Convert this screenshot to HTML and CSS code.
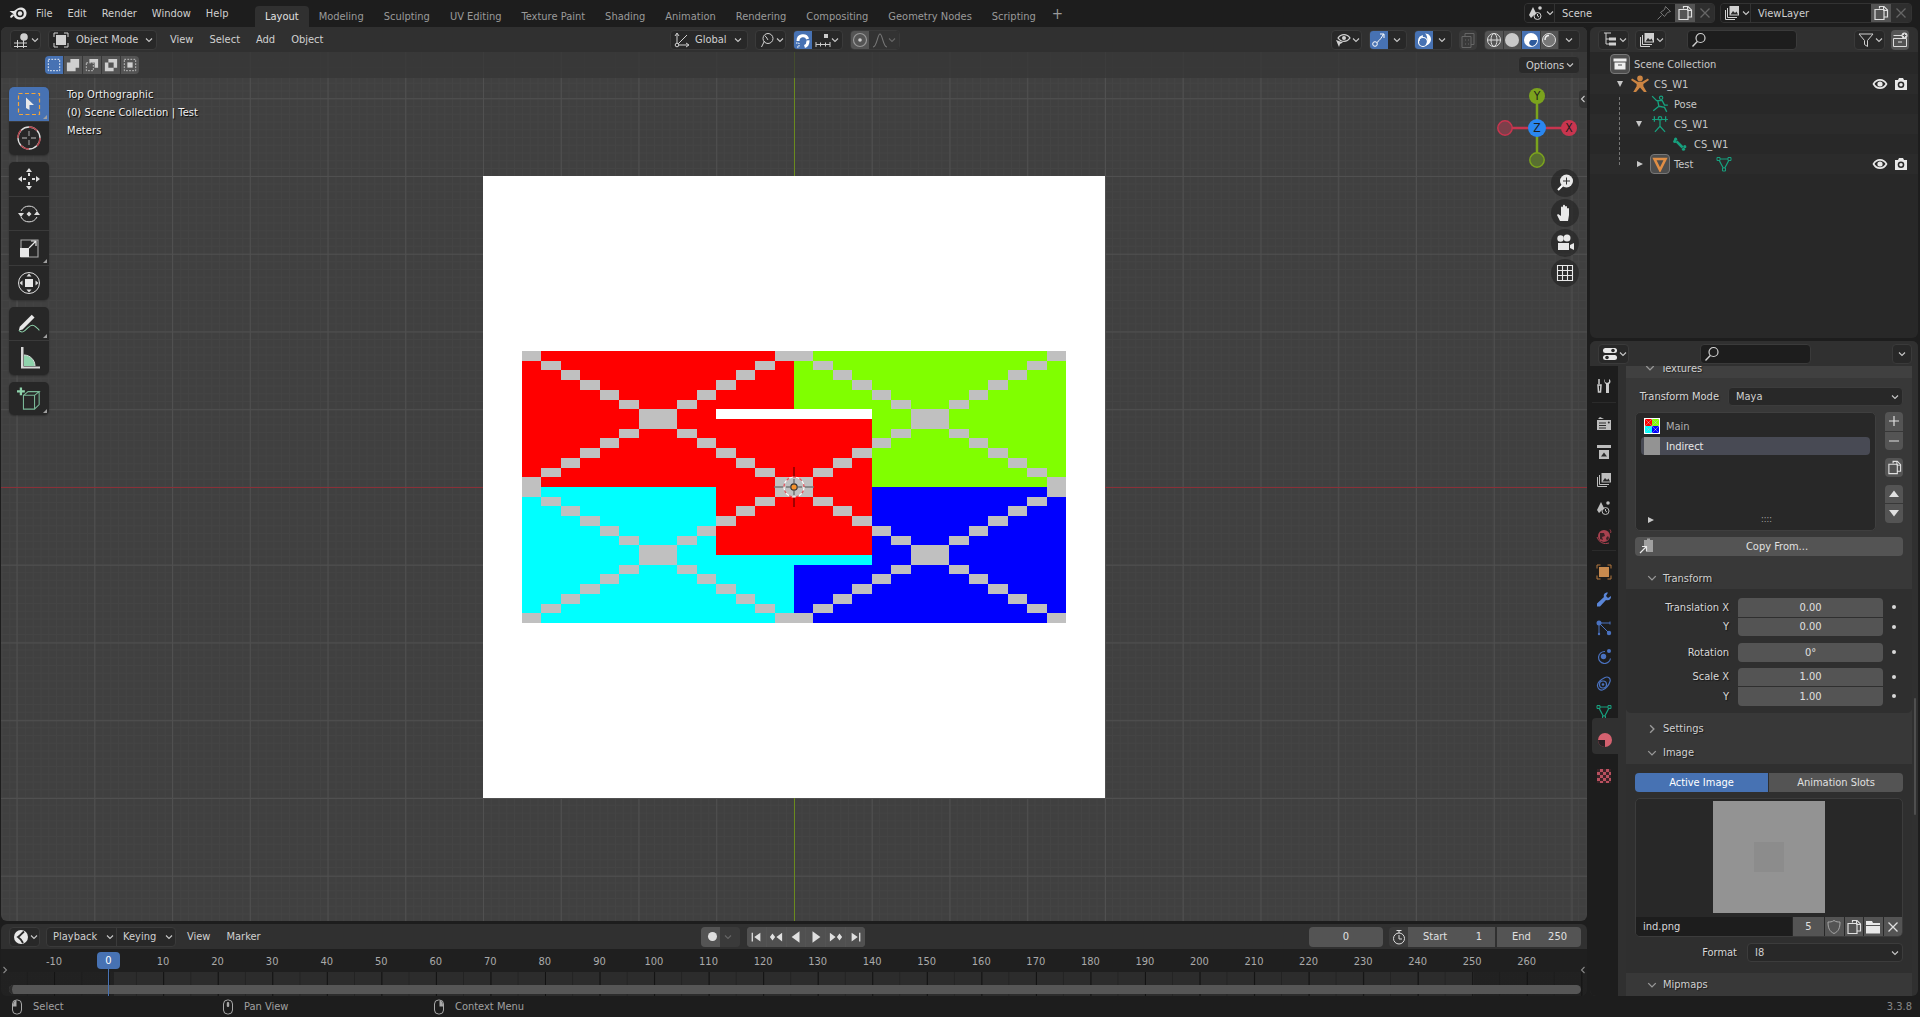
FILE: index.html
```html
<!DOCTYPE html>
<html lang="en">
<head>
<meta charset="utf-8">
<title>Blender</title>
<link rel="stylesheet" href="styles.css">
</head>
<body>
<svg class="sprite" aria-hidden="true">
  <defs>
    <symbol id="chev" viewBox="0 0 8 8"><path d="M1 2.500l3 3 3-3" fill="none" stroke="currentColor" stroke-width="1.100"/></symbol>
    <symbol id="copy" viewBox="0 0 16 16"><path d="M6.500 3.500V1.500h4.500l3.500 3.500v7h-3.500M2 4.500h9V14.500H2z" fill="none" stroke="currentColor" stroke-width="1.200"/><path d="M10.500 1.500v4h4" fill="none" stroke="currentColor"/></symbol>
    <symbol id="close" viewBox="0 0 16 16"><path d="M3.500 3.500l9 9M12.500 3.500l-9 9" stroke="currentColor" stroke-width="1.300"/></symbol>
    <symbol id="eye" viewBox="0 0 16 16"><path d="M1.500 8c3-5.500 10-5.500 13 0c-3 5.500-10 5.500-13 0z" fill="none" stroke="currentColor" stroke-width="1.600"/><circle cx="8" cy="8" r="2.600" fill="currentColor"/></symbol>
    <symbol id="cam" viewBox="0 0 16 16"><path d="M2 4h3l1-2h4l1 2h3v10H2z" fill="currentColor"/><circle cx="8" cy="8.800" r="3.300" fill="#2a2a2a"/><circle cx="8" cy="8.800" r="1.800" fill="currentColor"/></symbol>
    <symbol id="search" viewBox="0 0 16 16"><circle cx="9.500" cy="6" r="4.500" fill="none" stroke="currentColor" stroke-width="1.200"/><path d="M6.300 9.500L1.500 14.500" stroke="currentColor" stroke-width="1.400"/></symbol>
    <symbol id="layers" viewBox="0 0 16 16"><path d="M1.500 5v9.500H11M3.500 3v9.500H13" fill="none" stroke="currentColor"/><rect x="5.500" y="1" width="9.500" height="9.500" fill="currentColor"/><path d="M6.500 9.500l2.500-3.500 2 2 1.500-1.500 1.500 3z" fill="#2a2a2a"/></symbol>
    <symbol id="scene" viewBox="0 0 16 16"><path d="M5 2l3.500 7-2.500 1-3 3-2-3z" fill="currentColor"/><circle cx="12" cy="3" r="1.800" fill="currentColor"/><circle cx="9.500" cy="11" r="3.500" fill="none" stroke="currentColor"/><path d="M9.500 9v2l1.500 1" fill="none" stroke="currentColor"/></symbol>
    <symbol id="mesh" viewBox="0 0 16 16"><path d="M2.500 3h11L8 13.500z" fill="none" stroke="currentColor" stroke-width="1.200"/><path d="M1 1.500h3v3H1zM12 1.500h3v3h-3zM6.500 12h3v3h-3z" fill="#2a2a2a" stroke="currentColor"/></symbol>
    <symbol id="mouse-l" viewBox="0 0 12 16"><rect x="1.500" y="1" width="9" height="14" rx="4" fill="none" stroke="currentColor"/><path d="M2 7.500h3.500V1.500C3 1.500 2 4 2 7.500z" fill="currentColor"/></symbol>
    <symbol id="mouse-m" viewBox="0 0 12 16"><rect x="1.500" y="1" width="9" height="14" rx="4" fill="none" stroke="currentColor"/><rect x="4.800" y="3" width="2.400" height="5" rx="1" fill="currentColor"/></symbol>
    <symbol id="mouse-r" viewBox="0 0 12 16"><rect x="1.500" y="1" width="9" height="14" rx="4" fill="none" stroke="currentColor"/><path d="M10 7.500H6.500V1.500C9 1.500 10 4 10 7.500z" fill="currentColor"/></symbol>
    <g id="xmark" fill="#c0c0c0">
      <path d="M0 0h1v1H0zM13 0h1v1h-1zM1 1h1v1H1zM12 1h1v1h-1zM2 2h1v1H2zM11 2h1v1h-1zM3 3h1v1H3zM10 3h1v1h-1zM4 4h1v1H4zM9 4h1v1H9zM5 5h1v1H5zM8 5h1v1H8zM6 6h2v2H6zM5 8h1v1H5zM8 8h1v1H8zM4 9h1v1H4zM9 9h1v1H9zM3 10h1v1H3zM10 10h1v1h-1zM2 11h1v1H2zM11 11h1v1h-1zM1 12h1v1H1zM12 12h1v1h-1zM0 13h1v1H0zM13 13h1v1h-1z"/>
    </g>
    <symbol id="quads" viewBox="0 0 28 28" preserveAspectRatio="none">
      <rect width="14" height="14" fill="#f00"/>
      <rect x="14" width="14" height="14" fill="#80ff00"/>
      <rect y="14" width="14" height="14" fill="#0ff"/>
      <rect x="14" y="14" width="14" height="14" fill="#00f"/>
      <use href="#xmark"/>
      <use href="#xmark" x="14"/>
      <use href="#xmark" y="14"/>
      <use href="#xmark" x="14" y="14"/>
    </symbol>
  </defs>
</svg>

<div class="app">
  <header class="topbar">
    <svg class="logo" viewBox="0 0 20 16" width="20" height="16"><path d="M1 9.500h5L1.500 6h4.500L9.500 3.500C13 1 18 3 18.500 7.500C19 12.500 14.500 15 11 14.500C8 14 6 12.500 6 10.500L4 12.500C3 13.500 1.500 12 2.500 11L4 9.500z" fill="#e6e6e6"/><circle cx="12" cy="8.500" r="3.800" fill="#1d1d1d"/><circle cx="12" cy="8.500" r="2.200" fill="#e6e6e6"/></svg>
    <nav class="menus">
      <span class="menu">File</span><span class="menu">Edit</span><span class="menu">Render</span><span class="menu">Window</span><span class="menu">Help</span>
    </nav>
    <nav class="tabs">
      <span class="tab tab-on">Layout</span><span class="tab">Modeling</span><span class="tab">Sculpting</span><span class="tab">UV Editing</span><span class="tab">Texture Paint</span><span class="tab">Shading</span><span class="tab">Animation</span><span class="tab">Rendering</span><span class="tab">Compositing</span><span class="tab">Geometry Nodes</span><span class="tab">Scripting</span><span class="tab tab-plus">+</span>
    </nav>
    <div class="selector sel-scene">
      <span class="sel-icon"><svg class="ic16"><use href="#scene"/></svg><svg class="chev"><use href="#chev"/></svg></span>
      <span class="sel-name sel-name-scene">Scene<svg class="ic16 pin" viewBox="0 0 16 16"><path d="M9.500 1.500l5 5-3 1-3 4-4-4 4-3zM5.500 10.500L1.500 14.500" fill="none" stroke="currentColor"/></svg></span>
      <span class="sel-btn sel-btn-on"><svg class="ic16"><use href="#copy"/></svg></span>
      <span class="sel-btn sel-btn-x"><svg class="ic16"><use href="#close"/></svg></span>
    </div>
    <div class="selector sel-layer">
      <span class="sel-icon"><svg class="ic16"><use href="#layers"/></svg><svg class="chev"><use href="#chev"/></svg></span>
      <span class="sel-name sel-name-layer">ViewLayer</span>
      <span class="sel-btn sel-btn-on"><svg class="ic16"><use href="#copy"/></svg></span>
      <span class="sel-btn sel-btn-x"><svg class="ic16"><use href="#close"/></svg></span>
    </div>
  </header>

  <main class="main">
    <div class="col-left">
      <section class="viewport">
        <div class="vp-header">
          <div class="vh-left">
            <span class="drop drop-icon"><svg class="ic16" viewBox="0 0 16 16"><path d="M0 11h13M0 14.500h13M3.500 8v8M9.500 8v8" stroke="currentColor" fill="none"/><circle cx="10" cy="5" r="3.800" fill="currentColor"/></svg><svg class="chev"><use href="#chev"/></svg></span>
            <span class="drop drop-mode"><svg class="ic16" viewBox="0 0 16 16"><path d="M1 5V1h4M11 1h4v4M15 11v4h-4M5 15H1v-4" fill="none" stroke="currentColor"/><rect x="3" y="3" width="10" height="10" fill="currentColor"/></svg><span class="drop-text">Object Mode</span><svg class="chev"><use href="#chev"/></svg></span>
            <span class="hmenus"><span class="hmenu">View</span><span class="hmenu">Select</span><span class="hmenu">Add</span><span class="hmenu">Object</span></span>
          </div>
          <div class="vh-center">
            <span class="drop drop-global"><svg class="ic16" viewBox="0 0 16 16"><path d="M3 13V2M3 13L13 3M3 13h11M1 4l2-3 2 3M12 11l3 2-3 2" fill="none" stroke="currentColor"/><circle cx="3" cy="13" r="1.800" fill="#2b2b2b" stroke="currentColor"/></svg><span class="drop-text">Global</span><svg class="chev"><use href="#chev"/></svg></span>
            <span class="drop drop-pivot"><svg class="ic16" viewBox="0 0 16 16"><circle cx="9" cy="6.500" r="5" fill="none" stroke="currentColor"/><path d="M5.500 9L2.500 15M6 4c2 1 2 3 3 4" fill="none" stroke="currentColor"/></svg><svg class="chev"><use href="#chev"/></svg></span>
            <span class="seg seg-snap"><span class="seg-b seg-blue"><svg class="ic16" viewBox="0 0 16 16"><path d="M3 9C3 2 13 2 13 9c0 3-2 5-3.500 5.500" fill="none" stroke="#fff" stroke-width="3" stroke-dasharray="14 1.500"/><path d="M1 11h3v4H1" fill="none" stroke="#fff" stroke-width="1" stroke-dasharray="1.500 1"/></svg></span><span class="seg-b seg-wide"><svg class="ic16" viewBox="0 0 16 16"><rect x="9" y="2" width="4" height="4" fill="currentColor"/><path d="M1 10v5M15 10v5M1 12.500h14M5.500 10.500v4M10.500 10.500v4" stroke="currentColor" fill="none"/></svg><svg class="chev"><use href="#chev"/></svg></span></span>
            <span class="seg seg-prop"><span class="seg-b seg-grey"><svg class="ic16" viewBox="0 0 16 16"><circle cx="8" cy="8" r="6.500" fill="none" stroke="#999" stroke-width="1.200"/><circle cx="8" cy="8" r="1.800" fill="#ccc"/></svg></span><span class="seg-b seg-wide seg-dim"><svg class="ic16" viewBox="0 0 16 16"><path d="M1 15C5 15 5.500 2 8 2s3 13 7 13" fill="none" stroke="currentColor" stroke-width="1.100"/></svg><svg class="chev"><use href="#chev"/></svg></span></span>
          </div>
          <div class="vh-right">
            <span class="drop drop-pivot"><svg class="ic16" viewBox="0 0 16 16"><path d="M3 6c3-4.500 9-4.500 12 0c-3 4.500-9 4.500-12 0z" fill="none" stroke="currentColor" stroke-width="1.300"/><circle cx="9" cy="6" r="2" fill="currentColor"/><path d="M1 8l7 2.500-3 1.500-1 3z" fill="currentColor"/></svg><svg class="chev"><use href="#chev"/></svg></span>
            <span class="seg seg-gizmo"><span class="seg-b seg-blue"><svg class="ic16" viewBox="0 0 16 16"><circle cx="4" cy="12" r="2.300" fill="none" stroke="#fff"/><path d="M6 10.500C9 8 11 5 12.500 2M9 2h4v4" fill="none" stroke="#fff"/></svg></span><span class="seg-b seg-chev"><svg class="chev"><use href="#chev"/></svg></span></span>
            <span class="seg seg-gizmo"><span class="seg-b seg-blue"><svg class="ic16" viewBox="0 0 16 16"><circle cx="7" cy="10" r="4.500" fill="none" stroke="#fff" stroke-width="1.200"/><path d="M9 1.500c4 0 6 3 6 6s-3 6-6 6c3-2 3-10 0-12z" fill="#fff"/><path d="M7 4C5 4 2.500 6 3 9" fill="none" stroke="#fff" stroke-width="1.500"/></svg></span><span class="seg-b seg-chev"><svg class="chev"><use href="#chev"/></svg></span></span>
            <span class="seg seg-xray"><svg class="ic16 dim-ic" viewBox="0 0 16 16"><path d="M5 4.500V1.500h9v11h-3M2 4.500h9v11H2z" fill="none" stroke="currentColor"/><path d="M5 8h1M8 8h1M5 12h1M8 12h1" stroke="currentColor"/></svg></span>
            <span class="seg seg-shade"><span class="seg-b seg-sh"><svg class="ic16" viewBox="0 0 16 16"><circle cx="8" cy="8" r="6.500" fill="none" stroke="currentColor"/><ellipse cx="8" cy="8" rx="3" ry="6.500" fill="none" stroke="currentColor"/><path d="M1.500 8h13" stroke="currentColor"/></svg></span><span class="seg-b seg-sh"><svg class="ic16" viewBox="0 0 16 16"><circle cx="8" cy="8" r="7" fill="#c9c9c9"/></svg></span><span class="seg-b seg-sh seg-blue"><svg class="ic16" viewBox="0 0 16 16"><circle cx="8" cy="8" r="7" fill="#fff"/><path d="M8 8h6c0 3-2 5.500-5 6-3-1-4-4-1-6z" fill="#2d5a9c"/></svg></span><span class="seg-b seg-sh"><svg class="ic16" viewBox="0 0 16 16"><circle cx="8" cy="8" r="6.500" fill="#777" stroke="#ddd"/><path d="M4 8c0-3 2-4.500 4-4.500" fill="none" stroke="#eee" stroke-width="1.500"/></svg></span><span class="seg-b seg-shchev"><svg class="chev"><use href="#chev"/></svg></span></span>
          </div>
        </div>
        <div class="vp-tools">
          <span class="boxmodes">
            <span class="bm bm-on"><svg class="ic16" viewBox="0 0 16 16"><rect x="1.500" y="1.500" width="13" height="13" fill="none" stroke="#fff" stroke-dasharray="2 1.500"/></svg></span>
            <span class="bm"><svg class="ic16" viewBox="0 0 16 16"><path d="M5 1h10v10h-4v4H1V5h4z" fill="#cfcfcf"/></svg></span>
            <span class="bm"><svg class="ic16" viewBox="0 0 16 16"><path d="M5 1h10v10h-4V5H5z" fill="#cfcfcf"/><path d="M1.500 5.500h8v9h-8z" fill="none" stroke="#cfcfcf" stroke-dasharray="2 1.500"/></svg></span>
            <span class="bm"><svg class="ic16" viewBox="0 0 16 16"><path d="M5 1h10v10h-4V5H5z" fill="#cfcfcf"/><path d="M1 5h10v10H1zM5 5v6h6V5z" fill="#cfcfcf" fill-rule="evenodd"/></svg></span>
            <span class="bm"><svg class="ic16" viewBox="0 0 16 16"><rect x="1.500" y="1.500" width="13" height="13" fill="none" stroke="#cfcfcf" stroke-dasharray="2 1.500"/><rect x="5" y="5" width="6" height="6" fill="#cfcfcf"/></svg></span>
          </span>
          <span class="drop drop-options"><span class="drop-text">Options</span><svg class="chev"><use href="#chev"/></svg></span>
        </div>

        <div class="axis axis-y"></div>
        <div class="axis axis-x"></div>

        <div class="texture">
          <svg class="tex-svg" viewBox="0 0 28 28" preserveAspectRatio="none" shape-rendering="crispEdges">
            <use href="#quads" width="28" height="28"/>
            <rect x="10" y="6" width="8" height="1" fill="#fff"/>
            <rect x="10" y="7" width="8" height="14" fill="#f00"/>
            <rect x="10" y="21" width="8" height="1" fill="#0ff"/>
            <path fill="#c0c0c0" d="M10 10h1v1h-1zM17 10h1v1h-1zM11 11h1v1h-1zM16 11h1v1h-1zM12 12h1v1h-1zM15 12h1v1h-1zM13 13h2v2h-2zM12 15h1v1h-1zM15 15h1v1h-1zM11 16h1v1h-1zM16 16h1v1h-1zM10 17h1v1h-1zM17 17h1v1h-1z"/>
          </svg>
          <svg class="cursor3d" viewBox="0 0 44 44" width="44" height="44">
            <path d="M22 2v10M22 32v10" stroke="#a00000" stroke-width="2"/>
            <path d="M2 22h10M32 22h10M22 14v4M22 26v4M14 22h4M26 22h4" stroke="#777" stroke-width="1.600"/>
            <circle cx="22" cy="22" r="10" fill="none" stroke="#fff" stroke-width="1.200" stroke-dasharray="4 3"/>
            <circle cx="22" cy="22" r="10" fill="none" stroke="#e8505a" stroke-width="1.200" stroke-dasharray="3 4" stroke-dashoffset="3.500"/>
            <circle cx="22" cy="22" r="3.200" fill="#f5922b" stroke="#333" stroke-width="1.200"/>
          </svg>
        </div>

        <div class="vp-info">
          <div>Top Orthographic</div>
          <div>(0) Scene Collection | Test</div>
          <div>Meters</div>
        </div>

        <aside class="toolbar">
          <div class="tgroup">
            <span class="tool tool-on has-sub"><svg class="ic24" viewBox="0 0 24 24"><rect x="1.500" y="1.500" width="21" height="21" fill="none" stroke="#f3a53a" stroke-width="1.200" stroke-dasharray="4 2.500"/><path d="M9 5.500l8 7.500h-4.500l0 5L9 16z" fill="#e8e8e8"/></svg></span>
            <span class="tool"><svg class="ic24" viewBox="0 0 24 24"><circle cx="12" cy="12" r="11" fill="none" stroke="#ddd" stroke-width="1.300"/><path d="M12 1a11 11 0 0 1 8 3.500M1 12a11 11 0 0 1 3-8M12 23a11 11 0 0 1-8-3.500M23 12a11 11 0 0 1-3 8" fill="none" stroke="#b04048" stroke-width="1.400"/><path d="M12 5v5M12 14v5M5 12h5M14 12h5" stroke="#8c8c8c" stroke-width="1.300"/></svg></span>
          </div>
          <div class="tgroup">
            <span class="tool"><svg class="ic24" viewBox="0 0 24 24" fill="#ddd"><path d="M12 1l3 4H9zM12 23l-3-4h6zM1 12l4-3v6zM23 12l-4 3V9z"/><path d="M11 6h2v3h-2zM11 15h2v3h-2zM6 11h3v2H6zM15 11h3v2h-3z"/></svg></span>
            <span class="tool"><svg class="ic24" viewBox="0 0 24 24"><path d="M4 9a9 9 0 0 1 16 0M20 15a9 9 0 0 1-16 0" fill="none" stroke="#ddd" stroke-width="1"/><path d="M12 9.500l2.500 2.500-2.500 2.500L9.500 12zM1 11h6l-3 4zM23 13h-6l3-4z" fill="#ddd"/></svg></span>
            <span class="tool has-sub"><svg class="ic24" viewBox="0 0 24 24"><path d="M4 4h17v17H4z" fill="none" stroke="#aaa" stroke-width="1.100"/><rect x="3" y="12" width="9" height="9" fill="#e8e8e8"/><path d="M12 12l7-7M14 5h5v5" fill="none" stroke="#e8e8e8" stroke-width="1.200"/></svg></span>
            <span class="tool"><svg class="ic24" viewBox="0 0 24 24"><circle cx="12" cy="12" r="10.500" fill="none" stroke="#ddd" stroke-width="1"/><rect x="8" y="8" width="8" height="8" fill="#e8e8e8"/><path d="M12 2.500l2.500 3h-5zM12 21.500l-2.500-3h5zM2.500 12l3-2.500v5zM21.500 12l-3 2.500v-5z" fill="#ddd"/></svg></span>
          </div>
          <div class="tgroup">
            <span class="tool has-sub"><svg class="ic24" viewBox="0 0 26 24"><path d="M3 16l-1 4 4-1L19 6l-3-3z" fill="#e8e8e8"/><path d="M2 20c4 4 7 0 10-3s6-3 8-1 4 3 4 4" fill="none" stroke="#8fd3ac" stroke-width="1.100"/></svg></span>
            <span class="tool"><svg class="ic24" viewBox="0 0 24 24"><path d="M7 9c6 0 11 5 11 11H7z" fill="#8fd3ac"/><path d="M7 9c6 0 11 5 11 11" fill="none" stroke="#ddd"/><path d="M4 1h2.500v21H4zM4 20.500h19V22.500H4z" fill="#d8d8d8"/></svg></span>
          </div>
          <div class="tgroup">
            <span class="tool has-sub"><svg class="ic24" viewBox="0 0 26 26"><path d="M7 9h12v15H7zM7 9l5-4h12l-5 4M24 5v14l-5 5" fill="none" stroke="#79b796" stroke-width="1.200"/><path d="M3 0.500h2.500v3h3V6h-3v3H3V6H0V3.500h3z" fill="#8fd3ac"/></svg></span>
          </div>
        </aside>

        <svg class="gizmo" viewBox="0 0 84 84" width="84" height="84">
          <path d="M16 42h52" stroke="#c8354f" stroke-width="2.500"/>
          <path d="M42 10v64" stroke="#7ba31d" stroke-width="2.500"/>
          <circle cx="10" cy="42" r="7.200" fill="#7d3f4a" stroke="#c8354f" stroke-width="1.500"/>
          <circle cx="42" cy="74" r="7.200" fill="#586f31" stroke="#7ba31d" stroke-width="1.500"/>
          <circle cx="42" cy="10" r="8" fill="#7ba31d"/>
          <circle cx="74" cy="42" r="8" fill="#c8354f"/>
          <circle cx="42" cy="42" r="9" fill="#2a87f0"/>
          <text class="giz-t" x="42" y="14">Y</text>
          <text class="giz-t" x="74" y="46">X</text>
          <text class="giz-t" x="42" y="46">Z</text>
        </svg>
        <div class="vp-buttons">
          <span class="round"><svg class="ic16 ic-big" viewBox="0 0 18 18"><path d="M7 11L2 16" stroke="#fff" stroke-width="2.200"/><circle cx="10.500" cy="7" r="6.500" fill="#e8e8e8"/><path d="M10.500 3.500v7M7 7h7" stroke="#333"/></svg></span>
          <span class="round"><svg class="ic16 ic-big" viewBox="0 0 18 18"><path d="M4 17l-3-6 1-1 3 2V3.500a1 1 0 0 1 2 0V1.800a1 1 0 0 1 2 0V3a1 1 0 0 1 2 0v2a1 1 0 0 1 2 0v6l-1 6z" fill="#e8e8e8"/></svg></span>
          <span class="round"><svg class="ic16 ic-big" viewBox="0 0 18 18"><circle cx="4.500" cy="4.500" r="3.200" fill="#e8e8e8"/><circle cx="11" cy="4" r="3.500" fill="#e8e8e8"/><path d="M2 9h11v7H2zM14 11l4-2v7l-4-2z" fill="#e8e8e8"/></svg></span>
          <span class="round"><svg class="ic16 ic-big" viewBox="0 0 18 18"><path d="M1.500 1.500h15v15h-15zM1.500 6.500h15M1.500 11.500h15M6.500 1.500v15M11.500 1.500v15" fill="none" stroke="#e8e8e8" stroke-width="1.100"/></svg></span>
        </div>
        <span class="side-tab"><svg class="chev chev-left"><use href="#chev"/></svg></span>
      </section>

      <section class="timeline">
        <div class="tl-header">
          <div class="tl-left">
            <span class="drop drop-icon"><svg class="ic16" viewBox="0 0 16 16"><circle cx="8" cy="8" r="7" fill="#e8e8e8"/><path d="M11 2.500C8 5 8 6 5 8c3 2 4 4 5 6" fill="none" stroke="#2b2b2b" stroke-width="1.800"/></svg><svg class="chev"><use href="#chev"/></svg></span>
            <span class="joined"><span class="joined-b jb-play">Playback<svg class="chev"><use href="#chev"/></svg></span><span class="joined-b jb-key">Keying<svg class="chev"><use href="#chev"/></svg></span></span>
            <span class="hmenus"><span class="hmenu">View</span><span class="hmenu">Marker</span></span>
          </div>
          <span class="record"><span class="rec-dot"></span><svg class="chev dim-ic"><use href="#chev"/></svg></span>
          <span class="transport">
            <span class="tb"><svg viewBox="0 0 16 16" class="ic16"><path d="M3 3h1.500v10H3zM13 3v10L6 8z" fill="#e0e0e0"/></svg></span>
            <span class="tb"><svg viewBox="0 0 16 16" class="ic16"><path d="M4 4l3 4-3 4-3-4zM15 3v10L8.500 8z" fill="#e0e0e0"/></svg></span>
            <span class="tb"><svg viewBox="0 0 16 16" class="ic16"><path d="M12 1.500v13L3 8z" fill="#e0e0e0"/></svg></span>
            <span class="tb"><svg viewBox="0 0 16 16" class="ic16"><path d="M4 1.500v13L13 8z" fill="#e0e0e0"/></svg></span>
            <span class="tb"><svg viewBox="0 0 16 16" class="ic16"><path d="M12 4l3 4-3 4-3-4zM1 3v10L7.500 8z" fill="#e0e0e0"/></svg></span>
            <span class="tb"><svg viewBox="0 0 16 16" class="ic16"><path d="M3 3v10l7-5zM11.500 3H13v10h-1.500z" fill="#e0e0e0"/></svg></span>
          </span>
          <span class="frame-now">0</span>
          <span class="timer"><svg class="ic16" viewBox="0 0 16 16"><circle cx="8" cy="9.500" r="5.500" fill="none" stroke="currentColor"/><path d="M5.500 1.500h5M8 1.500V4M8 6v4h3" fill="none" stroke="currentColor"/></svg></span>
          <span class="range rg-start"><span>Start</span><span>1</span></span>
          <span class="range rg-end"><span>End</span><span>250</span></span>
        </div>
        <div class="tl-ruler">
          <span class="fr">-10</span><span class="fr fr-now"></span><span class="fr">10</span><span class="fr">20</span><span class="fr">30</span><span class="fr">40</span><span class="fr">50</span><span class="fr">60</span><span class="fr">70</span><span class="fr">80</span><span class="fr">90</span><span class="fr">100</span><span class="fr">110</span><span class="fr">120</span><span class="fr">130</span><span class="fr">140</span><span class="fr">150</span><span class="fr">160</span><span class="fr">170</span><span class="fr">180</span><span class="fr">190</span><span class="fr">200</span><span class="fr">210</span><span class="fr">220</span><span class="fr">230</span><span class="fr">240</span><span class="fr">250</span><span class="fr">260</span>
        </div>
        <div class="tl-tracks">
          <div class="tl-scroll"></div>
        </div>
        <span class="playhead"><span class="ph-box">0</span><span class="ph-line"></span></span>
        <svg class="chev tl-tab-l"><use href="#chev"/></svg>
        <svg class="chev tl-tab-r"><use href="#chev"/></svg>
      </section>
    </div>

    <div class="col-right">
      <section class="outliner">
        <div class="ol-header">
          <span class="drop drop-pivot"><svg class="ic16" viewBox="0 0 16 16"><path d="M2 1h7M4 1v11h3M4 7h3" fill="none" stroke="currentColor"/><path d="M7 5.500h7v3H7zM7 10.500h7v3H7z" fill="currentColor"/></svg><svg class="chev"><use href="#chev"/></svg></span>
          <span class="drop drop-pivot ol-gap"><svg class="ic16"><use href="#layers"/></svg><svg class="chev"><use href="#chev"/></svg></span>
          <span class="searchbox ol-search"><svg class="ic16"><use href="#search"/></svg></span>
          <span class="drop drop-pivot ol-filter"><svg class="ic16" viewBox="0 0 16 16"><path d="M1 2h14L9.500 8.500v6l-3-2v-4z" fill="none" stroke="currentColor"/></svg><svg class="chev"><use href="#chev"/></svg></span>
          <span class="ol-new"><svg class="ic16" viewBox="0 0 16 16"><path d="M1.500 3.500h9M1.500 6.500h13v8h-13zM6 10h4" fill="none" stroke="currentColor"/><circle cx="12.500" cy="3.500" r="3" fill="currentColor"/><path d="M12.500 1.800v3.400M10.800 3.500h3.400" stroke="#555"/></svg></span>
        </div>
        <div class="ol-tree">
          <div class="row r-a i0"><span class="boxed"><svg class="ic16" viewBox="0 0 16 16"><path d="M1.500 2.500h13v3h-13z" fill="#eee"/><path d="M2.500 6.500h11v7h-11zM6 8.500h4v1H6z" fill="#eee" fill-rule="evenodd"/></svg></span><span class="row-t">Scene Collection</span></div>
          <div class="row r-b i1"><span class="arrow-down"></span><svg class="ic16 row-i" viewBox="0 0 16 16"><circle cx="8" cy="3" r="2.500" fill="#cc8543"/><path d="M1 3l5 3h4l5-3 1 1.500L11 8v2l3 5h-2.500L8 11l-3.500 4H2l3-5V8L0 4.500z" fill="#cc8543"/></svg><span class="row-t">CS_W1</span><span class="row-vis"><svg class="ic16"><use href="#eye"/></svg><svg class="ic16"><use href="#cam"/></svg></span></div>
          <div class="row r-a i2"><span class="slot"></span><svg class="ic16 row-i ic-teal" viewBox="0 0 16 16"><circle cx="9" cy="2.500" r="1.500" fill="none" stroke="currentColor"/><path d="M1 1l4 4h5l2 4 3 0M6 5l1 5-5 4M7 10l5 1 2 4" fill="none" stroke="currentColor" stroke-width="1.200"/></svg><span class="row-t">Pose</span></div>
          <div class="row r-b i2"><span class="arrow-down"></span><svg class="ic16 row-i ic-teal" viewBox="0 0 16 16"><circle cx="8" cy="3" r="1.600" fill="none" stroke="currentColor"/><path d="M1 4h14M3 1v5M13 1v5M8 5v5L3.500 15M8 10l4.500 5" fill="none" stroke="currentColor" stroke-width="1.100"/></svg><span class="row-t">CS_W1</span></div>
          <div class="row r-a i3"><span class="slot"></span><svg class="ic16 row-i ic-teal ic-bone" viewBox="0 0 16 16"><path d="M4 5l7 7" stroke="currentColor" stroke-width="3"/><circle cx="3" cy="2.500" r="1.800" fill="currentColor"/><circle cx="2" cy="5" r="1.800" fill="currentColor"/><circle cx="13.500" cy="11" r="1.800" fill="currentColor"/><circle cx="12" cy="14" r="1.800" fill="currentColor"/></svg><span class="row-t">CS_W1</span></div>
          <div class="row r-b i2"><span class="arrow-right"></span><span class="boxed"><svg class="ic16" viewBox="0 0 16 16"><path d="M2.500 3h11L8 14z" fill="none" stroke="#e08e45" stroke-width="2.600"/></svg></span><span class="row-t">Test</span><svg class="ic16 ic-teal row-mesh"><use href="#mesh"/></svg><span class="row-vis"><svg class="ic16"><use href="#eye"/></svg><svg class="ic16"><use href="#cam"/></svg></span></div>
          <span class="tree-line"></span>
        </div>
      </section>

      <section class="props">
        <div class="pr-header">
          <span class="drop pr-editor"><svg class="ic16" viewBox="0 0 16 16"><rect x="1" y="2" width="14" height="5" rx="2.500" fill="#e8e8e8"/><rect x="1" y="9" width="14" height="5" rx="2.500" fill="#e8e8e8"/><circle cx="11" cy="4.500" r="1.800" fill="#2b2b2b"/><circle cx="5" cy="11.500" r="1.800" fill="#2b2b2b"/></svg><svg class="chev"><use href="#chev"/></svg></span>
          <span class="searchbox pr-search"><svg class="ic16"><use href="#search"/></svg></span>
          <span class="drop pr-opt"><svg class="chev"><use href="#chev"/></svg></span>
        </div>
        <div class="pr-body">
          <nav class="pr-nav">
            <span class="nv nv-tool"><svg class="ic16" viewBox="0 0 16 16"><path d="M3 1v5M2 7h3l-.5 7h-2z" fill="none" stroke="#ccc" stroke-width="1.500"/><path d="M9 1v3l2 1 2-1V1c2 1 2 4 0 5v9h-3V6C8 5 8 2 9 1z" fill="#ccc"/></svg></span>
            <span class="nv-sep nv-sep-a"></span>
            <span class="nv"><svg class="ic16" viewBox="0 0 16 16"><path d="M4 1l4 2h-6zM1 4h14v10H1z" fill="#bdbdbd"/><path d="M3 7h7M3 9.500h7M3 12h7" stroke="#2b2b2b"/><circle cx="12.800" cy="6.500" r="1" fill="#2b2b2b"/></svg></span>
            <span class="nv"><svg class="ic16" viewBox="0 0 16 16"><path d="M1 1h14v3H1zM3 6h10v9H3z" fill="#bdbdbd"/><path d="M5 12.500l3-4 3 4z" fill="#2b2b2b"/></svg></span>
            <span class="nv ic-grey"><svg class="ic16"><use href="#layers"/></svg></span>
            <span class="nv ic-grey"><svg class="ic16"><use href="#scene"/></svg></span>
            <span class="nv"><svg class="ic16" viewBox="0 0 16 16"><circle cx="8" cy="8" r="6" fill="#a8414f"/><path d="M4 5h4l1 3-3 1 1 3-3-1zM10 10l2-2 1 2-2 3z" fill="#3a2226"/><path d="M14 1.500C15 3 15 4 14.500 5M13 15A9 9 0 0 1 1 9" fill="none" stroke="#a8414f"/></svg></span>
            <span class="nv-sep nv-sep-b"></span>
            <span class="nv"><svg class="ic16" viewBox="0 0 16 16"><path d="M1 4.500V1h3.500M11.500 1H15v3.500M15 11.500V15h-3.500M4.500 15H1v-3.500" fill="none" stroke="#b5793f"/><rect x="3" y="3" width="10" height="10" fill="#c88a4e"/></svg></span>
            <span class="nv"><svg class="ic16" viewBox="0 0 16 16"><path d="M15 4l-3 2-2-2 2-3.500C9 0 7 2.500 8 5L1 11.500 1 14.500h3L10 8c3 1 5.500-1 5-4z" fill="#5a86d8"/></svg></span>
            <span class="nv"><svg class="ic16" viewBox="0 0 16 16" fill="#4a72c0"><circle cx="3" cy="3" r="2.500"/><circle cx="13" cy="13" r="2.200"/><circle cx="3" cy="14" r="1.200"/><path d="M3 3h11M3 3l10 10M3 3v11" stroke="#4a72c0" fill="none"/><path d="M14 1.500v3" stroke="#4a72c0"/></svg></span>
            <span class="nv"><svg class="ic16" viewBox="0 0 16 16"><path d="M9 3.500a6 6 0 1 0 5.500 7" fill="none" stroke="#4a72c0" stroke-width="1.200"/><circle cx="7.500" cy="8.500" r="2.700" fill="#4a72c0"/><circle cx="13" cy="3" r="2" fill="#4a72c0"/></svg></span>
            <span class="nv"><svg class="ic16" viewBox="0 0 16 16"><path d="M1.500 10C1 6 6 3 9 1.500c3-1.500 6 1 5 4-1 3-4 8-7.500 8.500C4 14.500 2 13 1.500 10z" fill="none" stroke="#4a72c0" stroke-width="1.200"/><circle cx="7" cy="8.500" r="3.500" fill="none" stroke="#4a72c0" stroke-width="1.200"/><circle cx="7" cy="8.500" r="1.300" fill="#4a72c0"/></svg></span>
            <span class="nv ic-teal"><svg class="ic16"><use href="#mesh"/></svg></span>
            <span class="nv nv-on"><svg class="ic16" viewBox="0 0 16 16"><circle cx="8" cy="8" r="7" fill="#d4616f"/><path d="M8 8H1A7 7 0 0 0 8 15z" fill="#2a2024"/></svg></span>
            <span class="nv nv-tex"><svg class="ic16" viewBox="0 0 16 16"><rect x="1" y="1" width="14" height="14" fill="#b9505f"/><path d="M1 1h3v3H1zM7 1h3v3H7zM13 1h2v3h-2zM4 4h3v3H4zM10 4h3v3h-3zM1 7h3v3H1zM7 7h3v3H7zM13 7h2v3h-2zM4 10h3v3H4zM10 10h3v3h-3zM1 13h3v2H1zM7 13h3v2H7zM13 13h2v2h-2z" fill="#3a2226"/></svg></span>
          </nav>
          <div class="pr-scroll">
            <div class="pn-head pn-head-top"><svg class="chev pn-chev"><use href="#chev"/></svg><span>Textures</span></div>
            <div class="pn-body">
              <div class="f-row f-mode">
                <span class="f-label l-mode">Transform Mode</span>
                <span class="select s-mode"><span>Maya</span><svg class="chev"><use href="#chev"/></svg></span>
              </div>
              <div class="listrow">
                <div class="listbox">
                  <div class="li"><svg class="thumb" viewBox="0 0 16 16"><rect width="16" height="16" fill="#fff"/><use href="#quads" x="1" y="1" width="14" height="14"/></svg><span>Main</span></div>
                  <div class="li li-on"><span class="thumb-grey"></span><span>Indirect</span></div>
                  <div class="li-foot"><span class="arrow-right arrow-lt"></span><span class="grip">::::</span></div>
                </div>
                <div class="sidebtns">
                  <div class="sgroup"><span class="sbtn"><svg class="ic12" viewBox="0 0 12 12"><path d="M6 1v10M1 6h10" stroke="#e0e0e0" stroke-width="1.200"/></svg></span><span class="sbtn"><svg class="ic12" viewBox="0 0 12 12"><path d="M1 6h10" stroke="#e0e0e0" stroke-width="1.200"/></svg></span></div>
                  <div class="sgroup"><span class="sbtn sbtn-t"><svg class="ic16"><use href="#copy"/></svg></span></div>
                  <div class="sgroup"><span class="sbtn"><svg class="ic12" viewBox="0 0 12 12"><path d="M6 2.500l5 6.500H1z" fill="#e0e0e0"/></svg></span><span class="sbtn"><svg class="ic12" viewBox="0 0 12 12"><path d="M6 9.500L1 3h10z" fill="#e0e0e0"/></svg></span></div>
                </div>
              </div>
              <div class="copyfrom"><svg class="ic16 cf-ic" viewBox="0 0 16 16"><path d="M5 2h3V0.500h3V2h3v12H7V9H5z" fill="#a0a0a0"/><path d="M1 15l6-6M3 8.500h4.500V13" fill="none" stroke="#e8e8e8" stroke-width="1.200"/></svg><span>Copy From...</span></div>

              <div class="pn-head"><svg class="chev pn-chev"><use href="#chev"/></svg><span>Transform</span></div>
              <div class="sub sub-transform">
                <div class="grid-f">
                  <span class="f-label">Translation X</span><span class="num num-top">0.00</span><span class="dot"></span>
                  <span class="f-label">Y</span><span class="num num-bot">0.00</span><span class="dot"></span>
                </div>
                <div class="grid-f grid-gap">
                  <span class="f-label">Rotation</span><span class="num">0°</span><span class="dot"></span>
                </div>
                <div class="grid-f grid-gap2">
                  <span class="f-label">Scale X</span><span class="num num-top">1.00</span><span class="dot"></span>
                  <span class="f-label">Y</span><span class="num num-bot">1.00</span><span class="dot"></span>
                </div>
              </div>
              <div class="pn-head pn-settings"><svg class="chev pn-chev pn-chev-r"><use href="#chev"/></svg><span>Settings</span></div>
              <div class="pn-head pn-image"><svg class="chev pn-chev"><use href="#chev"/></svg><span>Image</span></div>
              <div class="sub sub-image">
                <div class="imgtabs"><span class="it it-on">Active Image</span><span class="it">Animation Slots</span></div>
                <div class="preview">
                  <div class="prev-area"><div class="prev-img"><div class="prev-in"></div></div></div>
                  <div class="prev-row">
                    <span class="pv-name">ind.png</span>
                    <span class="pv-num">5</span>
                    <span class="pv-b"><svg class="ic16" viewBox="0 0 16 16"><path d="M8 1.500c2 1.500 4 1.500 6 1.500 0 6-1.500 9.500-6 11.500C3.500 12.500 2 9 2 3c2 0 4 0 6-1.500z" fill="none" stroke="#a8a8a8"/></svg></span>
                    <span class="pv-b"><svg class="ic16"><use href="#copy"/></svg></span>
                    <span class="pv-b"><svg class="ic16" viewBox="0 0 16 16"><path d="M1 2h6l1 2h7v2H1zM1 7h14v7.500H1z" fill="#e8e8e8"/></svg></span>
                    <span class="pv-b"><svg class="ic16"><use href="#close"/></svg></span>
                  </div>
                </div>
                <div class="f-row f-format">
                  <span class="f-label l-format">Format</span>
                  <span class="select s-format"><span>I8</span><svg class="chev"><use href="#chev"/></svg></span>
                </div>
              </div>
              <div class="pn-head pn-mip"><svg class="chev pn-chev"><use href="#chev"/></svg><span>Mipmaps</span></div>
            </div>
          </div>
          <span class="pr-thumb"></span>
        </div>
      </section>
    </div>
  </main>

  <footer class="status">
    <span class="st"><svg class="ic-mouse"><use href="#mouse-l"/></svg>Select</span>
    <span class="st"><svg class="ic-mouse"><use href="#mouse-m"/></svg>Pan View</span>
    <span class="st"><svg class="ic-mouse"><use href="#mouse-r"/></svg>Context Menu</span>
    <span class="version">3.3.8</span>
  </footer>
</div>
</body>
</html>
```
FILE: styles.css
```css
* { box-sizing: border-box; }
html, body { margin: 0; height: 100%; }
body {
  background: #1d1d1d;
  color: #c8c8c8;
  font-family: "DejaVu Sans Condensed", "DejaVu Sans", sans-serif;
  font-stretch: condensed;
  font-size: 11px;
  line-height: 1;
  overflow: hidden;
  white-space: nowrap;
}
.sprite { position: absolute; width: 0; height: 0; }
.ic16 { width: 16px; height: 16px; flex: none; display: block; }
.ic12 { width: 12px; height: 12px; flex: none; display: block; }
.ic24 { width: 24px; height: 24px; flex: none; display: block; }
.chev { width: 8px; height: 8px; flex: none; display: block; color: #c8c8c8; }
.dim-ic { color: #666; }

.app { display: grid; grid-template-columns: 1920px; grid-template-rows: 27px 969px 21px; width: 1920px; height: 1017px; }

/* top bar */
.topbar { display: flex; align-items: flex-start; background: #1d1d1d; min-width: 0; }
.logo { margin: 5px 0 0 8px; flex: none; }
.menus { display: flex; padding-top: 8px; width: 227px; flex: none; }
.menu { padding: 0 7.500px; color: #d0d0d0; }
.menu:first-child { padding-left: 8px; }
.tabs { display: flex; margin-top: 6px; }
.tab { padding: 5px 10px 0; height: 21px; color: #9a9a9a; white-space: nowrap; }
.tab-on { background: #303030; color: #e0e0e0; border-radius: 4px 4px 0 0; }
.tab-plus { font-size: 15px; padding-top: 1px; padding-left: 6px; }
.selector { display: flex; height: 20px; margin-top: 3px; border-radius: 4px; background: #282828; border: 1px solid #333; overflow: hidden; flex: none; }
.sel-scene { position: absolute; left: 1524px; width: 191px; }
.sel-layer { position: absolute; left: 1720px; width: 192px; }
.sel-icon { display: flex; align-items: center; gap: 2px; padding-left: 3px; width: 30px; background: #1d1d1d; flex: none; border-right: 1px solid #333; }
.sel-icon .ic16 { color: #d0d0d0; }
.sel-name { display: flex; align-items: center; justify-content: space-between; padding: 0 3px 0 7px; background: #1d1d1d; color: #d0d0d0; }
.sel-name-scene { width: 120px; }
.sel-name-layer { width: 120px; }
.pin { color: #777; }
.sel-btn { display: flex; align-items: center; justify-content: center; width: 20px; flex: none; color: #e0e0e0; }
.sel-btn-on { background: #545454; }
.sel-btn-x { background: #2e2e2e; color: #666; flex: 1; }

.main { display: flex; gap: 3px; padding: 0 2px 0 1px; min-height: 0; min-width: 0; }
.col-left { width: 1586px; display: flex; flex-direction: column; gap: 3px; flex: none; }
.col-right { flex: 1; display: flex; flex-direction: column; gap: 3px; min-width: 0; }

/* viewport */
.viewport {
  position: relative;
  height: 894px;
  flex: none;
  border-radius: 6px;
  overflow: hidden;
  background-color: #404040;
  background-image:
    linear-gradient(to right, #505050 1px, transparent 1px),
    linear-gradient(to bottom, #505050 1px, transparent 1px),
    linear-gradient(to right, #444 1px, transparent 1px),
    linear-gradient(to bottom, #444 1px, transparent 1px);
  background-size: 77.750px 100%, 100% 77.750px, 7.775px 100%, 100% 7.775px;
  background-position: 15.500px 0, 0 71.250px, 0.600px 0, 0 1.300px;
}
.vp-header { height: 25px; background: #303030; display: flex; align-items: center; padding: 0 7px 0 9px; position: relative; z-index: 3; }
.vh-left { width: 660px; display: flex; align-items: center; gap: 7px; flex: none; }
.vh-center { display: flex; align-items: center; gap: 7px; }
.vh-right { margin-left: auto; display: flex; align-items: center; gap: 7px; }
.drop { display: flex; align-items: center; height: 20px; background: #282828; border: 1px solid #3a3a3a; border-radius: 4px; flex: none; color: #d0d0d0; }
.drop-text { flex: 1; }
.drop-icon { width: 31px; padding-left: 3px; gap: 1px; }
.drop-mode { width: 109px; padding: 0 5px 0 4px; gap: 7px; }
.drop-global { width: 78px; padding: 0 5px 0 3px; gap: 5px; }
.drop-pivot { width: 31px; padding-left: 3px; gap: 1px; }
.drop-options { width: 62px; height: 18px; padding: 0 5px 0 7px; background: #2a2a2a; }
.hmenus { display: flex; margin-left: -2px; }
.hmenu { padding: 0 8px; color: #d0d0d0; }
.seg { display: flex; height: 20px; border-radius: 4px; overflow: hidden; background: #282828; border: 1px solid #3a3a3a; flex: none; }
.seg-b { display: flex; align-items: center; justify-content: center; color: #ccc; height: 100%; }
.seg-blue { background: #4772b3; width: 18px; flex: none; }
.seg-grey { background: #545454; width: 18px; flex: none; }
.seg-wide { width: 32px; gap: 0; }
.seg-dim { color: #777; background: #333; }
.seg-dim .chev { color: #666; }
.seg-snap, .seg-prop { width: 50px; }
.seg-chev { width: 20px; }
.seg-gizmo { width: 38px; }
.seg-xray { width: 18px; align-items: center; justify-content: center; background: #3a3a3a; color: #666; }
.seg-shade { width: 96px; }
.seg-sh { width: 18.500px; background: #545454; border-right: 1px solid #3a3a3a; flex: none; color: #ddd; }
.seg-sh.seg-blue { background: #4772b3; }
.seg-shchev { flex: 1; }

.vp-tools { height: 26px; background: rgba(52,52,52,.72); display: flex; align-items: center; justify-content: space-between; padding: 0 7px 0 44px; position: relative; z-index: 3; }
.boxmodes { display: flex; gap: 1px; height: 18px; }
.bm { width: 18px; height: 18px; background: #545454; display: flex; align-items: center; justify-content: center; }
.bm:first-child { border-radius: 4px 0 0 4px; }
.bm:last-child { border-radius: 0 4px 4px 0; }
.bm .ic16 { width: 14px; height: 14px; }
.bm-on { background: #4772b3; }

.axis { position: absolute; }
.axis-y { left: 793px; top: 25px; bottom: 0; width: 1px; background: #6a8a1e; }
.axis-x { top: 460px; left: 0; right: 0; height: 1px; background: #8a3038; }

.texture { position: absolute; left: 482px; top: 149px; width: 622px; height: 622px; background: #fff; display: flex; align-items: center; justify-content: center; }
.tex-svg { width: 544px; height: 272px; display: block; }
.cursor3d { position: absolute; left: 289px; top: 289px; }

.vp-info { position: absolute; left: 66px; top: 62px; display: flex; flex-direction: column; gap: 7px; color: #f0f0f0; text-shadow: 1px 1px 1px #000; letter-spacing: .1px; }
.vp-info div { height: 11px; line-height: 11px; }

.toolbar { position: absolute; left: 8px; top: 60px; display: flex; flex-direction: column; gap: 7px; width: 40px; z-index: 2; }
.tgroup { display: flex; flex-direction: column; gap: 1px; background: #3a3a3a; border-radius: 5px; overflow: hidden; box-shadow: 0 1px 2px rgba(0,0,0,.3); }
.tool { position: relative; height: 33.600px; background: #272727; display: flex; align-items: center; justify-content: center; }
.tool-on { background: #4772b3; }
.has-sub::after { content: ""; position: absolute; right: 2px; bottom: 2px; border: 2px solid transparent; border-right-color: #a0a0a0; border-bottom-color: #a0a0a0; }

.gizmo { position: absolute; right: 8px; top: 59px; }
.giz-t { font-size: 12px; fill: #1d1d1d; text-anchor: middle; font-family: "DejaVu Sans", sans-serif; }
.vp-buttons { position: absolute; left: 1550px; top: 142px; display: flex; flex-direction: column; gap: 2px; }
.round { width: 28px; height: 28px; border-radius: 50%; background: rgba(35,35,35,.65); display: flex; align-items: center; justify-content: center; }
.ic-big { width: 18px; height: 18px; }
.side-tab { position: absolute; right: 0; top: 63px; width: 8px; height: 18px; background: #333; border-radius: 4px 0 0 4px; display: flex; align-items: center; justify-content: center; }
.chev-left { transform: rotate(90deg); }

/* timeline */
.timeline { position: relative; height: 72px; flex: none; border-radius: 6px; overflow: hidden; background: #1d1d1d; }
.tl-header { height: 25px; background: #303030; display: flex; align-items: center; padding: 0 6px 0 8px; }
.tl-left { width: 692px; display: flex; align-items: center; gap: 6px; flex: none; }
.joined { display: flex; height: 20px; background: #282828; border: 1px solid #3a3a3a; border-radius: 4px; flex: none; }
.joined-b { display: flex; align-items: center; justify-content: space-between; padding: 0 2px 0 6px; color: #d0d0d0; }
.jb-play { width: 70px; border-right: 1px solid #3a3a3a; }
.jb-key { width: 58px; }
.tl-left .hmenus { margin-left: -3px; }
.record { display: flex; align-items: center; justify-content: space-between; height: 20px; width: 39px; padding: 0 8px 0 7px; background: linear-gradient(to right, #545454 0 19px, #3a3a3a 19px); border-radius: 4px; flex: none; }
.rec-dot { width: 9px; height: 9px; background: #e0e0e0; border-radius: 50%; }
.transport { display: flex; height: 20px; width: 118px; margin-left: 7px; background: #545454; border-radius: 4px; flex: none; gap: 1px; overflow: hidden; }
.tb { flex: 1; display: flex; align-items: center; justify-content: center; background: #505050; }
.tb .ic16 { width: 14px; height: 14px; }
.frame-now { margin-left: auto; width: 74px; height: 20px; background: #545454; border-radius: 4px; display: flex; align-items: center; justify-content: center; color: #e0e0e0; flex: none; }
.timer { margin-left: 6px; width: 19px; height: 20px; display: flex; align-items: center; justify-content: center; background: #3a3a3a; border-radius: 4px 0 0 4px; flex: none; color: #ddd; }
.range { display: flex; align-items: center; justify-content: space-between; height: 20px; background: #545454; color: #e0e0e0; flex: none; }
.rg-start { width: 87px; padding: 0 13px 0 15px; margin-right: 2px; }
.rg-end { width: 84px; padding: 0 14px 0 15px; border-radius: 0 4px 4px 0; }
.tl-ruler { height: 23px; display: flex; padding-left: 25.700px; align-items: center; background: #1f1f1f; }
.fr { width: 54.550px; text-align: center; color: #aaa; flex: none; padding-top: 1px; }
.tl-tracks {
  height: 24px;
  padding: 13px 6px 0 8px;
  background-color: #2c2c2c;
  background-image:
    linear-gradient(to right, rgba(20,20,20,.45) 0 113px, transparent 113px 1473px, rgba(20,20,20,.45) 1473px),
    linear-gradient(to right, #121212 1px, transparent 1px),
    linear-gradient(to right, #232323 1px, transparent 1px);
  background-size: 100% 100%, 54.550px 100%, 27.275px 100%;
  background-position: 0 0, 53.100px 0, 25.800px 0;
}
.tl-scroll { height: 9px; background: #565656; border-radius: 5px; box-shadow: inset 6px 0 0 -3px #2b2b2b; }
.playhead { position: absolute; left: 96px; top: 28px; display: flex; flex-direction: column; align-items: center; width: 23px; }
.ph-box { width: 23px; height: 17px; background: #4772b3; border-radius: 4px; color: #fff; display: flex; align-items: center; justify-content: center; }
.ph-line { width: 1px; height: 27px; background: #4772b3; }
.tl-tab-l { position: absolute; left: 0; top: 42px; transform: rotate(-90deg); color: #888; }
.tl-tab-r { position: absolute; right: 0; top: 42px; transform: rotate(90deg); color: #888; }

/* outliner */
.outliner { height: 311px; flex: none; border-radius: 6px; overflow: hidden; background: #282828; }
.ol-header { height: 25px; background: #303030; display: flex; align-items: center; padding: 0 7px 0 8px; }
.ol-gap { margin-left: 6px; }
.searchbox { display: flex; align-items: center; height: 20px; padding-left: 3px; background: #1d1d1d; border: 1px solid #3a3a3a; border-radius: 4px; color: #d0d0d0; flex: none; }
.ol-search { margin-left: 21px; width: 110px; }
.ol-filter { margin-left: 57px; }
.ol-new { margin-left: 6px; width: 18px; height: 20px; background: #545454; border-radius: 4px; display: flex; align-items: center; justify-content: center; color: #ddd; flex: none; }
.ol-tree { position: relative; padding-top: 2px; }
.row { height: 20px; display: flex; align-items: center; color: #c8c8c8; }
.r-a { background: #282828; }
.r-b { background: #2b2b2b; }
.i0 { padding-left: 20px; }
.i1 { padding-left: 20px; }
.i2 { padding-left: 39px; }
.i3 { padding-left: 60px; }
.slot, .arrow-down, .arrow-right { width: 20px; flex: none; position: relative; height: 10px; }
.i2 > .slot, .i2 > .arrow-down, .i2 > .arrow-right { width: 21px; }
.arrow-down::before { content: ""; position: absolute; left: 7px; top: 2px; border: 3.500px solid transparent; border-top: 6px solid #c8c8c8; border-bottom: 0; }
.arrow-right::before { content: ""; position: absolute; left: 8px; top: 2px; border: 3.500px solid transparent; border-left: 6px solid #c8c8c8; border-right: 0; }
.row-i { width: 18px; height: 18px; margin: 0 1px; }
.ic-bone { width: 14px; height: 14px; margin: 0 3px; }
.row-t { margin-left: 4px; }
.row-mesh { margin-left: 23px; }
.row-vis { margin-left: auto; display: flex; gap: 5px; padding-right: 9px; color: #e8e8e8; }
.boxed { width: 20px; height: 20px; border-radius: 4px; background: #4e4e4e; border: 1px solid #777; display: flex; align-items: center; justify-content: center; flex: none; }
.ic-teal { color: #17a07e; }
.ic-grey { color: #bdbdbd; }
.tree-line { position: absolute; left: 29px; top: 45px; height: 68px; border-left: 1px dashed #777; }

/* properties */
.props { height: 655px; flex: none; border-radius: 6px; overflow: hidden; background: #303030; display: flex; flex-direction: column; position: relative; }
.pr-header { height: 25px; background: #303030; display: flex; align-items: center; padding: 0 6px 0 8px; flex: none; }
.pr-editor { width: 31px; padding-left: 3px; gap: 1px; }
.pr-search { margin-left: 71px; width: 111px; }
.pr-opt { margin-left: auto; width: 20px; justify-content: center; }
.pr-body { display: flex; flex: 1; min-height: 0; position: relative; }
.pr-nav { width: 28px; background: #1d1d1d; display: flex; flex-direction: column; align-items: center; padding-top: 12px; flex: none; }
.nv { height: 28px; width: 28px; display: flex; align-items: center; justify-content: center; flex: none; }
.nv-tool { height: 26px; margin-top: -5px; }
.nv-sep { width: 24px; height: 1px; background: #2b2b2b; flex: none; }
.nv-sep-a { margin: 3px 0 7px; }
.nv-sep-b { margin: 0 0 7px; }
.nv-on { background: #303030; border-radius: 4px 0 0 4px; height: 36px; padding-top: 8px; margin-top: -8px; width: 26px; margin-left: 2px; }
.nv-tex { margin-top: 8px; }
.pr-scroll { flex: 1; margin: 0 6px 0 8px; overflow: hidden; background: #383838; min-width: 0; }
.pn-head { height: 22px; display: flex; align-items: center; margin-top: 11px; padding-left: 23px; color: #d0d0d0; background: #383838; margin-left: -9px; margin-right: -9px; text-shadow: 1px 1px 1px rgba(0,0,0,.5); }
.pn-chev { margin-right: 6px; color: #999; width: 10px; height: 10px; margin-left: -2px; }
.pn-chev-r { transform: rotate(-90deg); }
.pn-head-top { height: 20px; margin: -8px 0 0; background: #404040; padding-left: 21px; }
.pn-body { padding: 9px 9px 0; background: #383838; }
.f-row { display: flex; align-items: center; }
.f-label { text-align: right; color: #d8d8d8; text-shadow: 1px 1px 1px rgba(0,0,0,.5); }
.l-mode { width: 84px; margin-right: 9px; flex: none; }
.select { display: flex; align-items: center; justify-content: space-between; height: 19px; background: #282828; border: 1px solid #3c3c3c; border-radius: 4px; padding: 0 3px 0 7px; color: #d0d0d0; flex: none; }
.s-mode { width: 175px; }
.listrow { display: flex; gap: 9px; margin-top: 6px; }
.listbox { width: 241px; height: 119px; background: #282828; border: 1px solid #3f3f3f; border-radius: 5px; position: relative; padding: 4px 5px 0; flex: none; }
.li { height: 18px; display: flex; align-items: center; gap: 6px; padding-left: 3px; color: #b0b0b0; }
.li-on { margin-top: 2px; background: #484a54; border-radius: 4px; color: #e8e8e8; }
.thumb { width: 16px; height: 16px; flex: none; }
.thumb-grey { width: 16px; height: 18px; background: #939393; flex: none; }
.li-foot { position: absolute; left: 0; right: 0; bottom: 4px; height: 12px; }
.arrow-lt { position: absolute; left: 4px; top: 1px; }
.grip { position: absolute; left: 125px; top: 1px; color: #aaa; font-size: 9px; }
.sidebtns { display: flex; flex-direction: column; gap: 8px; width: 18px; flex: none; }
.sgroup { display: flex; flex-direction: column; gap: 1px; border-radius: 4px; overflow: hidden; }
.sbtn { height: 18.500px; background: #545454; display: flex; align-items: center; justify-content: center; color: #e0e0e0; }
.sbtn-t .ic16 { width: 15px; height: 15px; }
.copyfrom { position: relative; display: flex; align-items: center; justify-content: center; height: 19px; margin-top: 6px; background: #545454; border-radius: 4px; color: #e0e0e0; }
.copyfrom span { margin-left: 16px; }
.cf-ic { position: absolute; left: 4px; top: 1px; }
.sub { background: #2f2f2f; margin: 0 -9px; padding: 9px 9px 0; }
.sub-transform { height: 124px; border-radius: 0 0 5px 5px; }
.grid-f { display: grid; grid-template-columns: 94px 145px 20px; column-gap: 9px; row-gap: 1px; align-items: center; grid-auto-rows: 18.500px; }
.grid-gap { margin-top: 7px; }
.grid-gap2 { margin-top: 6px; }
.num { height: 100%; background: #545454; display: flex; align-items: center; justify-content: center; color: #e0e0e0; border-radius: 4px; }
.num-top { border-radius: 4px 4px 0 0; }
.num-bot { border-radius: 0 0 4px 4px; }
.dot { width: 4px; height: 4px; background: #d8d8d8; border-radius: 50%; justify-self: start; }
.pn-settings { margin-top: 3px; height: 25px; }
.pn-image { margin-top: 0; height: 23px; }
.sub-image { height: 209px; }
.imgtabs { display: flex; height: 19px; gap: 1px; }
.it { flex: 1; display: flex; align-items: center; justify-content: center; background: #545454; color: #e0e0e0; }
.it:last-child { border-radius: 0 4px 4px 0; }
.it-on { background: #4772b3; color: #fff; border-radius: 4px 0 0 4px; flex: none; width: 133px; }
.preview { margin-top: 6px; height: 139px; background: #282828; border: 1px solid #3c3c3c; border-radius: 5px; overflow: hidden; display: flex; flex-direction: column; }
.prev-area { height: 118px; display: flex; justify-content: center; padding-top: 2px; }
.prev-img { width: 112px; height: 112px; background: #939393; display: flex; align-items: center; justify-content: center; }
.prev-in { width: 30px; height: 30px; background: #8c8c8c; }
.prev-row { display: flex; height: 19px; gap: 1px; flex: none; }
.pv-name { width: 156px; background: #1d1d1d; padding-left: 7px; display: flex; align-items: center; color: #d8d8d8; flex: none; }
.pv-num { width: 31px; background: #545454; display: flex; align-items: center; justify-content: center; color: #e0e0e0; flex: none; }
.pv-b { flex: 1; background: #545454; display: flex; align-items: center; justify-content: center; color: #e0e0e0; }
.f-format { margin-top: 6px; }
.l-format { width: 102px; margin-right: 10px; flex: none; }
.s-format { width: 156px; }
.pn-mip { margin-top: 0; height: 23px; }
.pr-thumb { position: absolute; right: 2px; top: 332px; width: 2px; height: 117px; background: #4f4f4f; border-radius: 2px; }

/* status */
.status { display: flex; align-items: center; color: #a0a0a0; padding-left: 11px; position: relative; min-width: 0; }
.st { width: 211px; display: flex; align-items: center; gap: 10px; }
.ic-mouse { width: 12px; height: 16px; flex: none; color: #a8a8a8; }
.version { margin-left: auto; padding-right: 8px; color: #888; }
```
